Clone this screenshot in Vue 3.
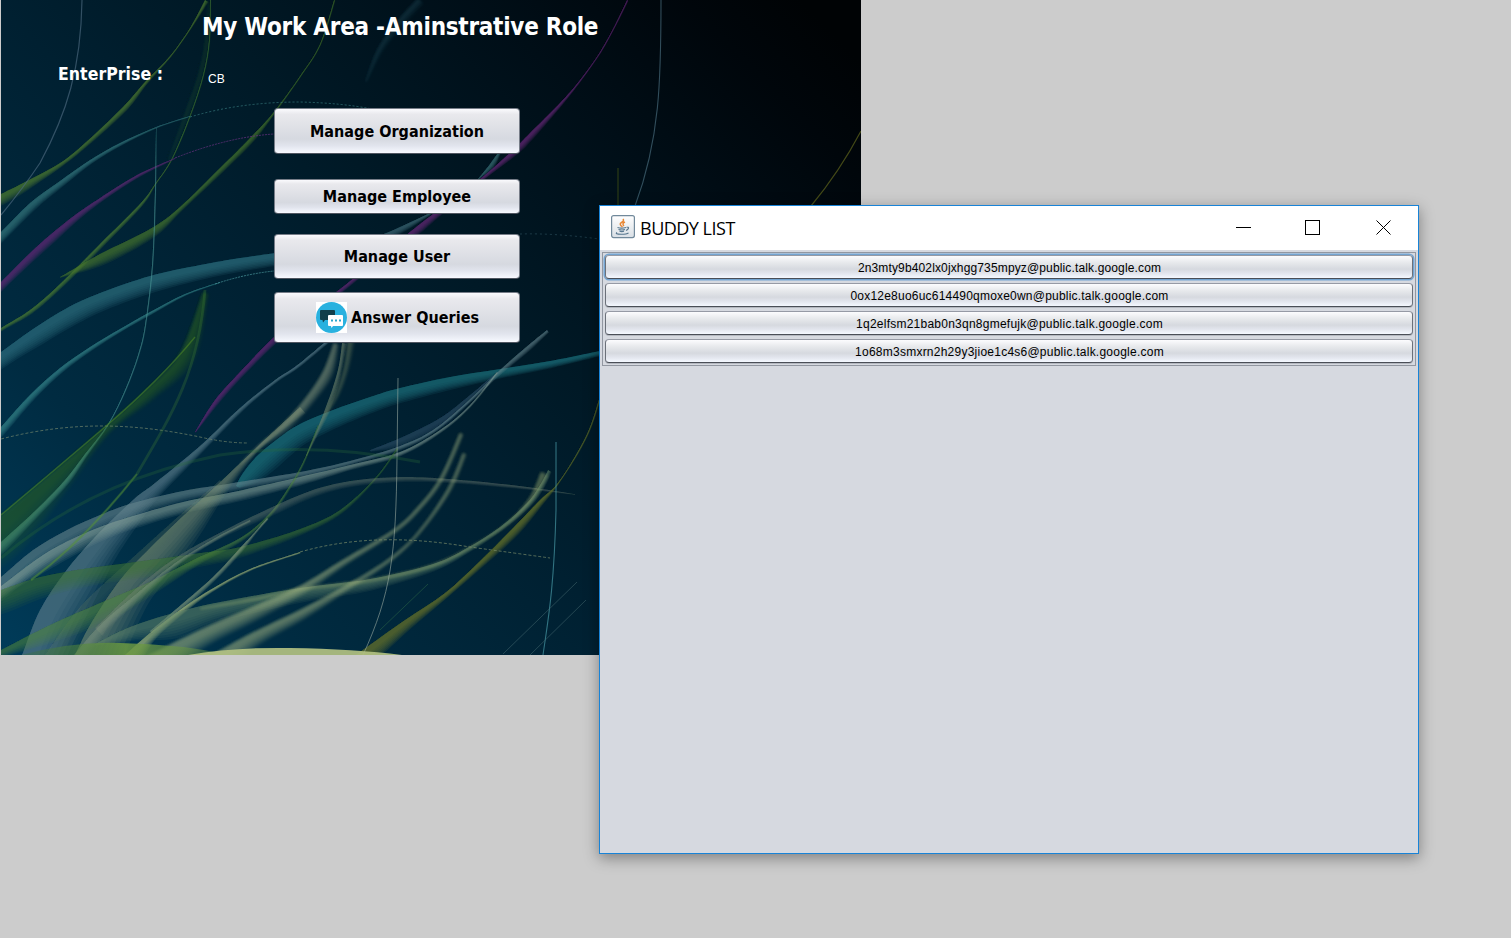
<script setup>
const buddies = [
  '2n3mty9b402lx0jxhgg735mpyz@public.talk.google.com',
  '0ox12e8uo6uc614490qmoxe0wn@public.talk.google.com',
  '1q2elfsm21bab0n3qn8gmefujk@public.talk.google.com',
  '1o68m3smxrn2h29y3jioe1c4s6@public.talk.google.com',
]

/* Fine strands: d = path, c = colour, w = width, o = opacity, k = dash pattern */
const strands = [
  { d: 'M82 0C81 68 67 113 40 163Q24 187 1 215', c: '#47657a', w: 1.2, o: 0.7 },
  { d: 'M190 117Q240 102 300 102Q342 103 372 109', c: '#347579', w: 1, o: 0.75, k: '2 2' },
  { d: 'M175 158Q228 137 274 134', c: '#62307a', w: 1, o: 0.8, k: '2 1' },
  { d: 'M215 284Q245 274 274 271', c: '#448d93', w: 1, o: 0.8, k: '2 1' },
  { d: 'M1 439C75 420 137 424 200 437Q226 443 248 443', c: '#71856b', w: 1, o: 0.7, k: '3 2' },
  { d: 'M661 0C661 80 660 139 635 206', c: '#416474', w: 1.1, o: 0.75 },
  { d: 'M861 131Q840 171 811 206', c: '#4a5118', w: 1.2, o: 0.9 },
  { d: 'M618 168L618 206', c: '#394b16', w: 1.5, o: 0.6 },
  { d: 'M520 234Q555 233 599 239', c: '#294b58', w: 1, o: 0.7, k: '2 3' },
  { d: 'M398 378L397 458C396 555 391 594 363 655', c: '#9aaaa0', w: 1, o: 0.6 },
  { d: 'M556 442L556 510C554 590 548 620 543 655', c: '#4b9fac', w: 1.1, o: 0.65 },
  { d: 'M300 552C363 534 422 539 470 547Q514 553 550 558', c: '#798c69', w: 1, o: 0.7, k: '3 2' },
  { d: 'M577 582L503 654M586 600L530 655', c: '#507579', w: 1, o: 0.45 },
  { d: 'M428 584L380 630', c: '#265f45', w: 1, o: 0.6 },
  { d: 'M205 290C199 370 173 413 137 474Q84 541 31 580', c: '#4a8c31', w: 2.8, o: 0.26 },
  { d: 'M137 474Q84 541 31 580', c: '#5c9637', w: 1.6, o: 0.4 },
  { d: 'M1 558C76 495 153 469 220 455Q315 441 420 462', c: '#286a38', w: 3, o: 0.3 },
  { d: 'M1 515Q50 474 105 427T195 337', c: '#568f24', w: 1.4, o: 0.5 },
]

/*
 * Broad ribbons: p lists x, y, width along the crisp upper edge, left to right;
 * c = colour, o = opacity, b enables a soft edge.
 */
const ribbons = [
  { c: '#4f7e31', o: 0.8, p: [1,194,10, 25,182,8, 60,163,4, 85,143,4, 123,107,5, 145,82,3, 170,56,1.5, 190,28,1.5, 205,0,4] },
  { c: '#4f7e36', o: 0.85, p: [1,328,3, 30,310,4, 60,284,4, 100,244,4, 140,204,3, 155,184,1.2, 172,158,1.2, 190,115,1.2, 203,75,1.2, 209,40,1.2, 210,0,1.2] },
  { c: '#1d4a30', o: 0.35, b: 1, p: [168,160,3, 184,115,6, 198,75,6, 205,40,5, 208,0,2] },
  { c: '#4c7c31', o: 0.75, p: [60,277,1, 100,254,11, 150,229,9, 180,207,4, 220,168,5, 250,138,5, 273,113,2, 300,76,1.3, 320,44,1.3, 334,0,1.5] },
  { c: '#34767b', o: 0.85, p: [1,232,8, 30,203,8, 60,181,6, 90,160,4, 120,143,3, 156,127,1.5, 190,116,1] },
  { c: '#5c2b76', o: 0.9, p: [1,282,7, 30,253,8, 50,235,8, 75,215,6, 100,198,4, 137,175,3, 175,158,1] },
  { c: '#2b6b78', o: 0.95, p: [1,352,14, 33,329,17, 67,308,18, 100,293,17, 150,276,16, 200,265,14, 240,258,13, 276,253,12] },
  { c: '#37808a', o: 0.85, p: [1,427,7, 30,395,6, 60,368,5, 90,347,4, 120,329,3, 150,312,3, 185,294,1.8, 220,282,1] },
  { c: '#4f9d9c', o: 0.75, p: [1,542,9, 35,511,6, 65,480,5, 85,454,3, 108,424,1.3, 125,390,1.3, 138,355,1.3, 145,325,1.3, 152,265,1.3, 155,190,1.2, 156,128,0.5] },
  { c: '#37711f', o: 0.42, b: 1, p: [1,515,38, 55,470,22, 105,427,8, 145,391,12, 180,353,16, 203,292,6] },
  { c: '#3f6878', o: 0.8, p: [372,239,7, 400,227,6, 430,213,2] },
  { c: '#3e7880', o: 0.7, p: [478,179,1, 490,164,5, 500,150,2] },
  { c: '#622a78', o: 0.85, p: [195,432,1, 215,400,5, 240,372,5, 274,337,6, 300,317,5, 340,289,4, 390,248,4, 415,228,7, 433,214,6, 480,179,3, 513,150,6, 530,133,6, 560,103,3, 580,80,1.5, 600,52,1.3, 615,25,1.3, 627,0,1.6] },
  { c: '#1c6e7b', o: 0.85, p: [236,486,4, 243,473,16, 258,455,21, 280,437,20, 300,424,19, 333,410,17, 370,397,15, 400,388,14, 450,377,12, 500,369,9, 550,361,7, 600,351,5] },
  { c: '#31536a', o: 0.6, p: [370,450,2, 400,438,9, 440,418,9, 470,395,5, 497,372,1] },
  { c: '#5d828b', o: 0.7, p: [22,655,40, 40,610,42, 65,572,38, 95,537,28, 133,500,18, 155,483,12, 200,446,6, 240,408,4, 275,380,3, 300,363,3, 345,325,3] },
  { c: '#6a8b92', o: 0.62, p: [1,577,18, 33,550,18, 67,530,17, 100,515,15, 133,503,13, 183,491,10, 233,483,8, 300,472,6, 350,461,4, 400,446,4, 433,430,3, 467,402,2.5, 500,370,4, 525,348,5, 547,330,3] },
  { c: '#8ca39f', o: 0.56, p: [1,586,10, 40,557,15, 70,540,15, 100,527,13, 133,516,12, 183,502,11, 233,492,10, 300,477,8, 350,465,5, 400,452,4, 440,430,3, 470,405,2, 497,372,1.5] },
  { c: '#81937a', o: 0.52, p: [75,655,45, 90,625,42, 120,580,35, 150,548,32, 183,516,24, 217,485,12, 257,447,4, 300,407,8] },
  { c: '#81937a', o: 0.62, b: 1, p: [240,464,1, 257,447,3, 285,422,8, 308,395,9, 324,370,10, 334,343,5] },
  { c: '#7c9377', o: 0.5, p: [306,456,1, 316,432,3, 324,412,5, 333,387,5, 339,365,4, 342,343,5] },
  { c: '#7f8f68', o: 0.4, b: 1, p: [322,420,1, 335,395,4, 344,368,5, 348,340,7] },
  { c: '#6b8d7c', o: 0.22, p: [45,655,30, 80,607,22, 130,560,18, 180,515,8, 220,480,3] },
  { c: '#3f7a35', o: 0.55, p: [1,590,22, 40,577,20, 90,568,17, 150,560,16, 200,553,13, 240,547,10, 300,529,6, 340,510,4, 375,478,2, 397,448,2] },
  { c: '#548b3d', o: 0.55, p: [1,650,8, 50,625,17, 100,603,19, 150,582,12, 195,559,7, 240,538,4, 270,513,3, 290,485,2.5, 303,462,2, 312,440,1.5, 318,425,1] },
  { c: '#7b9382', o: 0.35, p: [95,628,12, 140,585,7, 180,555,6, 225,530,6, 270,508,8, 310,491,7, 350,481,6, 400,477,5, 450,479,4, 520,486,3, 575,494,1] },
  { c: '#839b80', o: 0.45, p: [74,655,12, 100,625,8, 135,595,7, 175,563,4, 215,538,3, 250,520,2] },
  { c: '#8aa687', o: 0.65, p: [150,631,3, 175,610,5, 213,577,4, 240,548,4, 254,533,2, 267,518,2] },
  { c: '#b7c983', o: 0.65, p: [125,655,16, 150,633,8, 180,610,5, 210,590,3, 250,569,2, 300,552,1.5] },
  { c: '#66856f', o: 0.55, p: [95,644,2, 130,627,14, 170,614,24, 220,602,18, 300,588,14, 370,579,11, 433,564,7, 467,548,5, 500,527,4, 527,503,5, 540,485,5, 548,470,4] },
  { c: '#b1c07a', o: 0.4, b: 1, p: [200,608,2, 260,597,3, 300,588,3, 370,579,3, 433,564,3, 480,541,2, 510,520,3, 530,497,5, 541,472,9] },
  { c: '#a6b784', o: 0.54, b: 1, p: [150,655,24, 200,630,17, 250,608,14, 300,586,9, 343,560,6, 393,530,4, 417,508,4, 440,478,4, 460,433,4] },
  { c: '#a6b784', o: 0.5, b: 1, p: [212,655,24, 250,634,14, 300,610,10, 343,587,6, 387,560,4, 417,533,3, 447,490,4, 463,453,4] },
  { c: '#697629', o: 0.8, p: [360,652,16, 405,620,10, 445,593,5, 480,561,6, 513,528,8, 540,500,5, 557,484,1.5, 577,453,1.5, 590,427,1.5, 600,396,1.5] },
  { c: '#244c59', o: 0.4, b: 1, p: [365,82,2, 378,48,6, 398,20,8, 418,-2,8] },
]

const r1 = (n) => Math.round(n * 10) / 10

/* Catmull-Rom curve segments through a list of points */
function curve(pts) {
  let out = ''
  for (let i = 0; i < pts.length - 1; i++) {
    const a = pts[i - 1] || pts[i]
    const b = pts[i]
    const c = pts[i + 1]
    const d = pts[i + 2] || c
    out += `C${r1(b[0] + (c[0] - a[0]) / 6)} ${r1(b[1] + (c[1] - a[1]) / 6)} ${r1(c[0] - (d[0] - b[0]) / 6)} ${r1(c[1] - (d[1] - b[1]) / 6)} ${r1(c[0])} ${r1(c[1])}`
  }
  return out
}

function band(flat, scale) {
  const edge = []
  for (let i = 0; i < flat.length; i += 3) edge.push([flat[i], flat[i + 1], flat[i + 2]])
  const [first, second] = edge
  /* Ribbons that meet the frame carry on past it */
  if (first[0] <= 1 || first[1] >= 650) {
    const reach = 45 / Math.hypot(second[0] - first[0], second[1] - first[1])
    edge.unshift([first[0] - (second[0] - first[0]) * reach, first[1] - (second[1] - first[1]) * reach, first[2]])
  }
  const far = edge.map(([x, y, w], i) => {
    const a = edge[i - 1] || edge[i]
    const b = edge[i + 1] || edge[i]
    const dx = b[0] - a[0]
    const dy = b[1] - a[1]
    const len = Math.hypot(dx, dy) || 1
    return [x - (dy / len) * w * scale, y + (dx / len) * w * scale]
  }).reverse()
  return `M${r1(edge[0][0])} ${r1(edge[0][1])}${curve(edge)}L${r1(far[0][0])} ${r1(far[0][1])}${curve(far)}Z`
}

const steps = [1.05, 0.94, 0.83, 0.72, 0.61, 0.5, 0.39]
const layers = ribbons.flatMap((r) => steps.map((s) => ({ d: band(r.p, s), c: r.c, o: r1(r.o * 200) / 1000, b: r.b })))
</script>

<template>
  <div class="screen">
    <main class="work">
      <svg class="art" viewBox="1 0 860 655" preserveAspectRatio="none" aria-hidden="true">
        <defs>
          <linearGradient id="night" gradientUnits="userSpaceOnUse" x1="70" y1="720" x2="800" y2="0">
            <stop offset="0" stop-color="#003b59" />
            <stop offset=".21" stop-color="#002b41" />
            <stop offset=".44" stop-color="#002031" />
            <stop offset=".58" stop-color="#001926" />
            <stop offset=".78" stop-color="#000e17" />
            <stop offset=".92" stop-color="#00060b" />
            <stop offset="1" stop-color="#000305" />
          </linearGradient>
          <linearGradient id="meadow" x1="0" x2="1">
            <stop offset="0" stop-color="#35702f" stop-opacity=".3" /><stop offset=".5" stop-color="#6d9a42" /><stop offset="1" stop-color="#5f8c45" stop-opacity=".5" />
          </linearGradient>
          <filter id="soft" x="-10%" y="-10%" width="120%" height="120%"><feGaussianBlur stdDeviation="1.4" /></filter>
        </defs>
        <rect x="1" width="860" height="655" fill="url(#night)" />
        <path v-for="(r, i) in layers" :key="'r' + i" :d="r.d" :fill="r.c" :opacity="r.o" :filter="r.b ? 'url(#soft)' : null" />
        <path v-for="(s, i) in strands" :key="'s' + i" :d="s.d" fill="none" :stroke="s.c" :stroke-width="s.w" :opacity="s.o" :stroke-dasharray="s.k" />
        <path d="M21 655Q75 641 120 643Q180 644 230 655Z" fill="url(#meadow)" opacity=".85" />
        <path d="M188 655Q235 647 290 648Q355 649 402 655Z" fill="#b2c182" opacity=".92" />
      </svg>
      <div class="content">
        <h1>My Work Area -Aminstrative Role</h1>
        <div class="enterprise"><strong>EnterPrise :</strong><span>CB</span></div>
        <nav class="actions">
          <button class="organization">Manage Organization</button>
          <button class="employee">Manage Employee</button>
          <button class="user">Manage User</button>
          <button class="queries">
            <svg width="31" height="31" viewBox="0 0 31 31">
              <path fill="#fff" d="M0 0h31v31H0z" />
              <circle cx="15.5" cy="15.5" r="15.5" fill="#29b1df" />
              <path d="M5 8h13q1 0 1 1v9H9l-2 2.500L6.500 18H5q-1 0-1-1V9q0-1 1-1z" fill="#123f4b" />
              <path d="M13 13h13q1 0 1 1v9q0 1-1 1h-9l-1.500 2-.5-2h-2q-1 0-1-1v-9q0-1 1-1z" fill="#fff" />
              <path d="M15 17.500h2v2h-2zm4 0h2v2h-2zm4 0h2v2h-2z" fill="#29a5cc" />
            </svg>
            <span>Answer Queries</span>
          </button>
        </nav>
      </div>
    </main>

    <section class="window">
      <header class="titlebar">
        <svg class="java" width="24" height="24" viewBox="0 0 24 24">
          <defs><linearGradient id="tile" x2="0" y2="1"><stop stop-color="#fff" /><stop offset="1" stop-color="#d9dfe5" /></linearGradient></defs>
          <rect x=".6" y=".6" width="22.8" height="22" rx="2" fill="url(#tile)" stroke="#71899b" stroke-width="1.2" />
          <path d="M12 4Q13.500 6 10.500 7.500T11.500 12M14 7Q10.500 8.500 13 11" fill="none" stroke="#e88734" stroke-width="1.5" />
          <path d="M6.500 12.500q4 1.200 8.500 0M7.500 14.500q3.500 1 6.500 0M8.500 16.300q2.500.7 4.500 0M15.500 12.300q2.500-.4 2 1T15 15.500M6 17.500q-2.500 1.700 4 1.800 6 0 7.500-1.500" fill="none" stroke="#58778f" stroke-width="1.1" />
        </svg>
        <span class="caption">BUDDY LIST</span>
        <svg class="controls" width="156" height="16" viewBox="0 0 156 16" fill="none" stroke="#000">
          <path d="M0 7.500h15M69.500.5h14v14h-14z" shape-rendering="crispEdges" />
          <path d="M140.500.5l14 14m0-14l-14 14" />
        </svg>
      </header>
      <div class="buddies">
        <button v-for="(buddy, index) in buddies" :key="buddy" :class="{ focused: index === 0 }">{{ buddy }}</button>
      </div>
    </section>
  </div>
</template>

<style>
body { margin: 0; overflow: hidden; background: #ccc; }
</style>

<style scoped>
.screen { position: relative; width: 1511px; height: 938px; overflow: hidden; background: #ccc; }
.work { position: relative; width: 860px; height: 655px; margin-left: 1px; overflow: hidden; font-family: "DejaVu Sans Condensed", "DejaVu Sans", sans-serif; font-stretch: condensed; }
.art { position: absolute; inset: 0; width: 860px; height: 655px; }
.content { position: relative; color: #fff; }
h1 { margin: 0; padding: 11px 0 0 201px; height: 31px; font-size: 24px; line-height: 32px; font-weight: bold; white-space: nowrap; letter-spacing: -0.26px; }
.enterprise { display: flex; align-items: flex-start; height: 66px; padding-left: 57px; box-sizing: border-box; margin-top: 19px; }
.enterprise strong { width: 150px; margin-top: 2px; font-size: 17.5px; line-height: 22px; letter-spacing: 0.05px; }
.enterprise span { margin-top: 10px; font: 12px/16px "Liberation Sans", Arial, sans-serif; }
.actions { display: flex; flex-direction: column; width: 246px; margin: -19px 0 0 273px; }
button { display: flex; align-items: center; justify-content: center; box-sizing: border-box; margin: 0; padding: 0; color: #000; border: 1px solid #747985; border-bottom-color: #3d424b; }
.actions button { border-color: #777d88; border-bottom-color: #4f5560; border-radius: 4px; background: linear-gradient(#fafafd 0, #e9e9ed 12%, #d6d9e0 68%, #e1e4ed 83%, #f7f9ff 100%); font: bold 16px/20px "DejaVu Sans Condensed", "DejaVu Sans", sans-serif; letter-spacing: 0.02px; }
.actions .organization { height: 46px; padding-top: 2px; }
.actions .employee { height: 35px; margin-top: 25px; }
.actions .user { height: 45px; margin-top: 20px; }
.actions .queries { height: 51px; margin-top: 13px; padding-left: 1px; gap: 4px; }
.window { position: absolute; left: 599px; top: 205px; width: 820px; height: 649px; box-sizing: border-box; border: 1px solid #1883d7; background: #d6d9e0; box-shadow: 0 4px 14px 0 rgba(0, 0, 0, .38); }
.titlebar { display: flex; align-items: flex-start; height: 44px; padding-left: 11px; background: #fff; }
.java { margin-top: 9px; }
.caption { margin: 10px 0 0 5px; width: 200px; font: 18px/24px "Open Sans", "Noto Sans", sans-serif; letter-spacing: -0.5px; color: #000; }
.controls { margin: 14px 26px 0 auto; }
.buddies { display: flex; flex-direction: column; gap: 4px; height: 114px; margin: 2px 2px 0; padding: 2px; box-sizing: border-box; border: 1px solid #9297a1; }
.buddies button { width: 100%; height: 24px; padding: 2px 0 0 1px; border-color: #969aa5 #6b7079 #4a4e57 #6b7079; border-radius: 4px; background: linear-gradient(#fcfcfe 0, #e7e9ec 30%, #d6d9df 60%, #e3e6ee 80%, #f4f8ff 100%); box-shadow: 0 1px #b4b8c0; font: 12px/16px "Liberation Sans", Arial, sans-serif; letter-spacing: 0.24px; }
.buddies button:nth-child(2) { letter-spacing: 0.21px; }
.buddies .focused { box-shadow: 0 0 0 1.5px #73a4d1; letter-spacing: 0.14px; }
</style>
